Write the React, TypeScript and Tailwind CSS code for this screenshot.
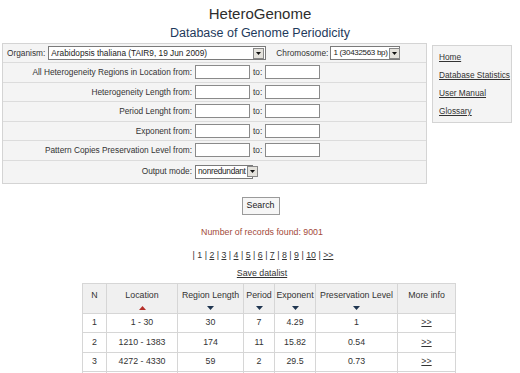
import React from "react";

const rangeRows = [
  "All Heterogeneity Regions in Location from:",
  "Heterogeneity Length from:",
  "Period Lenght from:",
  "Exponent from:",
  "Pattern Copies Preservation Level from:",
];

const pages = ["2", "3", "4", "5", "6", "7", "8", "9", "10"];

const rows = [
  { n: 1, loc: "1 - 30", len: "30", period: "7", exp: "4.29", pres: "1" },
  { n: 2, loc: "1210 - 1383", len: "174", period: "11", exp: "15.82", pres: "0.54" },
  { n: 3, loc: "4272 - 4330", len: "59", period: "2", exp: "29.5", pres: "0.73" },
  { n: 4, loc: "", len: "", period: "", exp: "", pres: "" },
];

const Arrow = () => (
  <span className="flex h-[11px] w-[11px] shrink-0 items-center justify-center border border-[#888] bg-[#e4e2dc]">
    <svg width="5" height="3" viewBox="0 0 5 3">
      <path d="M0 0h5L2.5 3z" fill="#111" />
    </svg>
  </span>
);

const FakeSelect = ({ text, className }: { text: string; className: string }) => (
  <div className={`flex h-[14px] shrink-0 items-center justify-between gap-[1px] border border-[#7a7a7a] bg-white pl-[2px] pr-[1px] text-[#222] ${className}`}>
    <span className="whitespace-nowrap leading-none">{text}</span>
    <Arrow />
  </div>
);

const Box = () => <div className="h-[14px] w-[55px] border border-[#8a8a8a] bg-white" />;

const SortMark = ({ up }: { up?: boolean }) => (
  <svg width="7" height="4" viewBox="0 0 7 4" className="mx-auto mt-[4px] block">
    {up ? <path d="M0 4h7L3.5 0z" fill="#b5302a" /> : <path d="M0 0h7L3.5 4z" fill="#1f3550" />}
  </svg>
);

export default function App() {
  return (
    <div className="h-[373px] w-[520px] overflow-hidden bg-white text-[#333] [font-family:'Liberation_Sans',Arial,sans-serif]">
      <h1 className="pt-[5px] text-center text-[15px] leading-[18px] text-[#2d2d2d]">HeteroGenome</h1>
      <h2 className="mt-[3px] text-center text-[12.5px] leading-[15px] text-[#1e3a5c]">Database of Genome Periodicity</h2>

      <div className="mt-[2px] flex items-start">
        <div className="ml-[2px] w-[425px] border border-[#d4d4d4] bg-[#f4f4f4] text-[8.3px]">
          <div className="flex h-[19px] items-center border-b border-[#dcdcdc] pl-[4px]">
            <span>Organism:</span>
            <FakeSelect text="Arabidopsis thaliana (TAIR9, 19 Jun 2009)" className="ml-[3px] w-[218px] text-[8.3px]" />
            <span className="ml-[10px]">Chromosome:</span>
            <FakeSelect text="1 (30432563 bp)" className="ml-[2px] w-[70px] text-[8px] tracking-[-0.3px]" />
          </div>
          {rangeRows.map((label) => (
            <div key={label} className="flex h-[19.5px] items-center border-b border-[#dcdcdc]">
              <span className="w-[192px] pr-[3px] text-right">{label}</span>
              <Box />
              <span className="ml-[3px] mr-[3px]">to:</span>
              <Box />
            </div>
          ))}
          <div className="flex h-[22px] items-center">
            <span className="w-[192px] pr-[3px] text-right">Output mode:</span>
            <FakeSelect text="nonredundant" className="w-[58px] text-[8.3px] tracking-[-0.3px]" />
          </div>
        </div>

        <div className="ml-[5px] mt-[2px] flex h-[78px] w-[80px] flex-col gap-[6px] border border-[#d4d4d4] bg-[#f4f4f4] pl-[6px] pt-[5px] text-[8.3px] leading-[12px] text-[#333]">
          <a className="whitespace-nowrap underline">Home</a>
          <a className="whitespace-nowrap underline">Database Statistics</a>
          <a className="whitespace-nowrap underline">User Manual</a>
          <a className="whitespace-nowrap underline">Glossary</a>
        </div>
      </div>

      <div className="mt-[13px] flex justify-center pl-[1px]">
        <button className="h-[18px] w-[38px] border border-[#9a9a9a] bg-[#f6f6f6] text-[8.8px] text-[#222]">Search</button>
      </div>

      <p className="mt-[11px] pl-[4px] text-center text-[8.8px] leading-[12px] text-[#a24a3a]">Number of records found: 9001</p>

      <p className="mt-[11px] pl-[6px] text-center text-[8.8px] leading-[12px] text-[#333]">
        | 1{" "}
        {pages.map((p) => (
          <React.Fragment key={p}>
            | <a className="underline">{p}</a>{" "}
          </React.Fragment>
        ))}
        | <a className="underline">&gt;&gt;</a>
      </p>

      <p className="mt-[6px] pl-[4px] text-center text-[8.8px] leading-[12px]">
        <a className="underline">Save datalist</a>
      </p>

      <table className="ml-[82px] mt-[4px] border-collapse text-center text-[8.8px] text-[#333]">
        <thead>
          <tr className="h-[30px] bg-[#f0f0f0] align-top">
            <th className="w-[24px] border border-[#d6d6d6] pt-[5px] font-normal">N</th>
            <th className="w-[71px] border border-[#d6d6d6] pt-[5px] font-normal">Location<SortMark up /></th>
            <th className="w-[66px] border border-[#d6d6d6] pt-[5px] font-normal">Region Length<SortMark /></th>
            <th className="w-[31px] border border-[#d6d6d6] pt-[5px] font-normal">Period<SortMark /></th>
            <th className="w-[41px] border border-[#d6d6d6] pt-[5px] font-normal">Exponent<SortMark /></th>
            <th className="w-[82px] border border-[#d6d6d6] pt-[5px] font-normal">Preservation Level<SortMark /></th>
            <th className="w-[58px] border border-[#d6d6d6] pt-[5px] font-normal">More info</th>
          </tr>
        </thead>
        <tbody>
          {rows.map((r) => (
            <tr key={r.n} className="h-[19.5px]">
              <td className="border border-[#d6d6d6]">{r.loc ? r.n : ""}</td>
              <td className="border border-[#d6d6d6]">{r.loc}</td>
              <td className="border border-[#d6d6d6]">{r.len}</td>
              <td className="border border-[#d6d6d6]">{r.period}</td>
              <td className="border border-[#d6d6d6]">{r.exp}</td>
              <td className="border border-[#d6d6d6]">{r.pres}</td>
              <td className="border border-[#d6d6d6]">{r.loc && <a className="underline">&gt;&gt;</a>}</td>
            </tr>
          ))}
        </tbody>
      </table>
    </div>
  );
}
